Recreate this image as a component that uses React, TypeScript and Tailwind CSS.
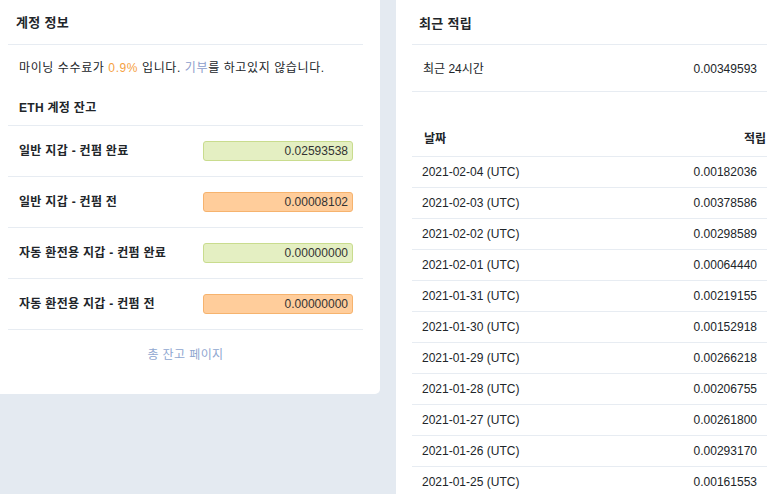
import React from "react";

const font = { fontFamily: '"Liberation Sans", "Noto Sans CJK KR", Arial, sans-serif' };

const balances = [
  { label: "일반 지갑 - 컨펌 완료", value: "0.02593538", kind: "green" },
  { label: "일반 지갑 - 컨펌 전", value: "0.00008102", kind: "orange" },
  { label: "자동 환전용 지갑 - 컨펌 완료", value: "0.00000000", kind: "green" },
  { label: "자동 환전용 지갑 - 컨펌 전", value: "0.00000000", kind: "orange" },
];

const rows = [
  ["2021-02-04 (UTC)", "0.00182036"],
  ["2021-02-03 (UTC)", "0.00378586"],
  ["2021-02-02 (UTC)", "0.00298589"],
  ["2021-02-01 (UTC)", "0.00064440"],
  ["2021-01-31 (UTC)", "0.00219155"],
  ["2021-01-30 (UTC)", "0.00152918"],
  ["2021-01-29 (UTC)", "0.00266218"],
  ["2021-01-28 (UTC)", "0.00206755"],
  ["2021-01-27 (UTC)", "0.00261800"],
  ["2021-01-26 (UTC)", "0.00293170"],
  ["2021-01-25 (UTC)", "0.00161553"],
];

export default function App() {
  return (
    <div
      className="w-[780px] h-[494px] overflow-hidden bg-[#e4eaf1] flex items-start gap-4 text-[#212529] text-[12px]"
      style={font}
    >
      <div className="w-[380px] shrink-0 bg-white rounded-br-[5px] pl-2 pr-[17px]">
        <div className="h-[45px] flex items-center pl-2 pt-[2px] text-[13px] font-semibold tracking-[0.3px] border-b border-[#e7ecf2]">
          계정 정보
        </div>
        <div className="h-[46px] flex items-center pl-[11px] tracking-[0.6px]">
          <span>
            마이닝 수수료가 <span className="text-[#f5a142]">0.9%</span> 입니다.{" "}
            <span className="text-[#8c9dcc]">기부</span>를 하고있지 않습니다.
          </span>
        </div>
        <div className="h-[35px] flex items-center pl-[11px] pb-[1px] font-bold tracking-[0.3px] border-b border-[#e7ecf2]">
          ETH 계정 잔고
        </div>
        {balances.map((b) => (
          <div
            key={b.label}
            className="h-[51px] flex items-center justify-between pl-[11px] pr-[10px] border-b border-[#e7ecf2]"
          >
            <span className="font-bold tracking-[0.3px]">{b.label}</span>
            <span
              className={
                b.kind === "green"
                  ? "w-[150px] h-[20px] flex items-center justify-end pr-[4px] rounded-[3px] border border-[#c9dc8e] bg-[#e4efc2] text-[#333]"
                  : "w-[150px] h-[20px] flex items-center justify-end pr-[4px] rounded-[3px] border border-[#f6b36e] bg-[#ffcd9b] text-[#333]"
              }
            >
              {b.value}
            </span>
          </div>
        ))}
        <div className="pt-[16px] h-[64px] text-center text-[#8fa7d0] tracking-[0.4px]">총 잔고 페이지</div>
      </div>

      <div className="flex-1 h-[494px] bg-white pl-4 pr-[13px]">
        <div className="h-[45px] flex items-center pl-[7px] pt-[3px] text-[13px] font-semibold tracking-[0.3px] border-b border-[#e7ecf2]">
          최근 적립
        </div>
        <div className="h-[47px] flex items-center justify-between pl-[11px] pr-[10px] pt-[1px] border-b border-[#e7ecf2]">
          <span>최근 24시간</span>
          <span>0.00349593</span>
        </div>
        <div className="h-[30px]" />
        <div className="h-[35px] flex items-center justify-between pl-[12px] pr-[1px] font-bold border-b border-[#e7ecf2]">
          <span>날짜</span>
          <span>적립</span>
        </div>
        {rows.map(([d, v]) => (
          <div
            key={d}
            className="h-[31px] flex items-center justify-between pl-[10px] pr-[10px] pb-[1px] border-b border-[#e7ecf2]"
          >
            <span>{d}</span>
            <span>{v}</span>
          </div>
        ))}
      </div>
    </div>
  );
}
